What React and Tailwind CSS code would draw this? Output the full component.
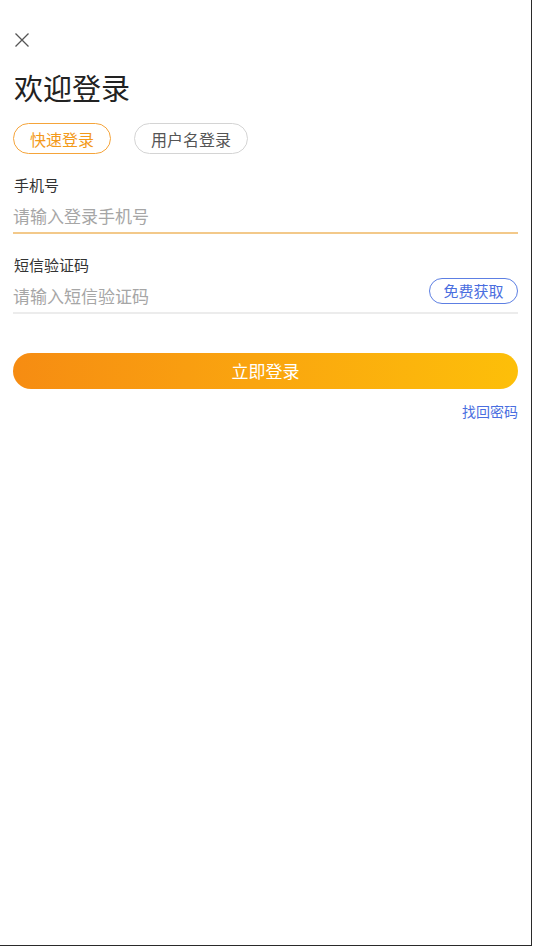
import { useState } from "react";

const font = { fontFamily: '"Noto Sans CJK SC", "Noto Sans", sans-serif' };

const App = () => {
  const [tab, setTab] = useState("quick");

  return (
    <div
      className="w-[532px] h-[946px] bg-white border-r border-b border-[#2a2a2a] px-[13px]"
      style={font}
    >
      {/* close */}
      <div className="pt-[32px] pl-[1px]">
        <svg width="16" height="16" viewBox="0 0 16 16" className="block">
          <path d="M1.5 1.5 L14.5 14.5 M14.5 1.5 L1.5 14.5" stroke="#555" strokeWidth="1.3" fill="none" />
        </svg>
      </div>

      <h1 className="mt-[24px] ml-[1px] text-[29px] leading-[30px] text-[#222] font-normal">欢迎登录</h1>

      {/* tabs */}
      <div className="mt-[21px] flex gap-[23px]">
        <button
          onClick={() => setTab("quick")}
          className={`h-[31px] px-[16px] rounded-full border text-[16px] leading-[20px] ${
            tab === "quick" ? "border-[#f5a43a] text-[#f39a1a]" : "border-[#d4d4d4] text-[#555]"
          }`}
        >
          快速登录
        </button>
        <button
          onClick={() => setTab("user")}
          className={`h-[31px] px-[16px] rounded-full border text-[16px] leading-[20px] ${
            tab === "user" ? "border-[#f5a43a] text-[#f39a1a]" : "border-[#d4d4d4] text-[#555]"
          }`}
        >
          用户名登录
        </button>
      </div>

      {/* phone */}
      <div className="mt-[21px] ml-[1px] text-[15px] leading-[20px] text-[#333]">手机号</div>
      <div className="pt-[11px] pb-[6px]">
        <input
          className="block w-full outline-none text-[17px] leading-[20px] h-[20px] text-[#333] placeholder:text-[#a6a6a6]"
          placeholder="请输入登录手机号"
        />
      </div>
      <div className="h-[2px] bg-[#f3c98a]" />

      {/* sms code */}
      <div className="mt-[21px] ml-[1px] text-[15px] leading-[20px] text-[#333]">短信验证码</div>
      <div className="flex justify-between items-start">
        <input
          className="block flex-1 mt-[11px] mb-[6px] outline-none text-[17px] leading-[20px] h-[20px] text-[#333] placeholder:text-[#a6a6a6]"
          placeholder="请输入短信验证码"
        />
        <button className="mt-[3px] h-[26px] w-[89px] rounded-full border border-[#5d7fe3] text-[15px] leading-[20px] text-[#4a6ee0]">
          免费获取
        </button>
      </div>
      <div className="h-[2px] bg-[#ececec]" />

      <button className="mt-[39px] w-full h-[36px] rounded-full bg-gradient-to-r from-[#f68c12] to-[#fdbf09] text-white text-[17px] leading-[20px]">
        立即登录
      </button>

      <div className="mt-[12px] text-right text-[14px] leading-[20px] text-[#4a6ee0]">找回密码</div>
    </div>
  );
};

export default App;
